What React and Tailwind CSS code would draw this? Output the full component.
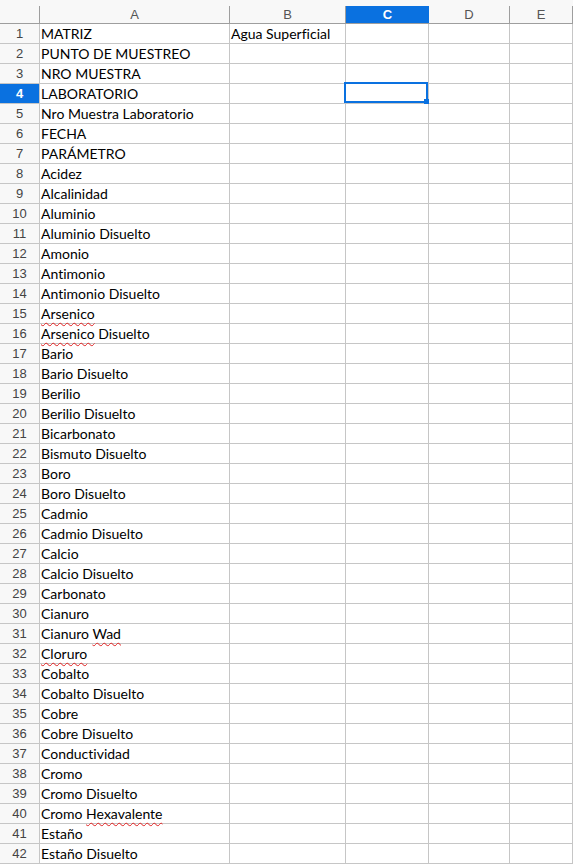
import React from "react";

const rows = [
  ["MATRIZ", "Agua Superficial"],
  ["PUNTO DE MUESTREO"],
  ["NRO MUESTRA"],
  ["LABORATORIO"],
  ["Nro Muestra Laboratorio"],
  ["FECHA"],
  ["PARÁMETRO"],
  ["Acidez"],
  ["Alcalinidad"],
  ["Aluminio"],
  ["Aluminio Disuelto"],
  ["Amonio"],
  ["Antimonio"],
  ["Antimonio Disuelto"],
  [[{ t: "Arsenico", bad: true }]],
  [[{ t: "Arsenico", bad: true }, { t: " Disuelto" }]],
  ["Bario"],
  ["Bario Disuelto"],
  ["Berilio"],
  ["Berilio Disuelto"],
  ["Bicarbonato"],
  ["Bismuto Disuelto"],
  ["Boro"],
  ["Boro Disuelto"],
  ["Cadmio"],
  ["Cadmio Disuelto"],
  ["Calcio"],
  ["Calcio Disuelto"],
  ["Carbonato"],
  ["Cianuro"],
  [[{ t: "Cianuro " }, { t: "Wad", bad: true }]],
  [[{ t: "Cloruro", bad: true }]],
  ["Cobalto"],
  ["Cobalto Disuelto"],
  ["Cobre"],
  ["Cobre Disuelto"],
  ["Conductividad"],
  ["Cromo"],
  ["Cromo Disuelto"],
  [[{ t: "Cromo " }, { t: "Hexavalente", bad: true }]],
  ["Estaño"],
  ["Estaño Disuelto"],
];

const cols = [
  { key: "A", w: "w-[190px]" },
  { key: "B", w: "w-[116px]" },
  { key: "C", w: "w-[83px]", active: true },
  { key: "D", w: "w-[81px]" },
  { key: "E", w: "flex-1" },
];

const CellText = ({ value }) => {
  if (!value) return null;
  if (typeof value === "string") return value;
  return value.map((p, i) =>
    p.bad ? (
      <span
        key={i}
        className="underline decoration-wavy decoration-[#e02020] decoration-1 underline-offset-[3px]"
      >
        {p.t}
      </span>
    ) : (
      <span key={i} className="whitespace-pre">
        {p.t}
      </span>
    )
  );
};

export default function App() {
  return (
    <div className="w-[573px] h-[864px] overflow-hidden bg-white select-none">
      {/* column headers */}
      <div className="flex h-[24px] bg-[#f8f8f8] border-b border-[#9e9e9e] font-['Liberation_Sans',sans-serif] text-[13px] text-[#555]">
        <div className="w-[40px] h-full flex items-end shrink-0">
          <div className="w-full h-[17px] border-r border-[#9e9e9e]" />
        </div>
        {cols.map((c) =>
          c.active ? (
            <div key={c.key} className={`${c.w} shrink-0 h-full flex items-end`}>
              <div className="w-full h-[17px] bg-[#0a71e0] text-white font-bold flex items-center justify-center">
                {c.key}
              </div>
            </div>
          ) : (
            <div key={c.key} className={`${c.w} shrink-0 h-full flex items-end`}>
              <div className="w-full h-[17px] border-r border-[#9e9e9e] flex items-center justify-center">
                {c.key}
              </div>
            </div>
          )
        )}
      </div>

      {/* rows */}
      {rows.map((r, i) => {
        const n = i + 1;
        const activeRow = n === 4;
        return (
          <div key={n} className="flex h-[20px]">
            <div
              className={`w-[40px] shrink-0 border-r border-b border-[#c6c6c6] flex items-center justify-center font-['Liberation_Sans',sans-serif] text-[13px] ${
                activeRow
                  ? "bg-[#0a71e0] text-white font-bold"
                  : "bg-[#f8f8f8] text-[#444]"
              }`}
            >
              {n}
            </div>
            {cols.map((c, j) => (
              <div
                key={c.key}
                className={`${c.w} shrink-0 relative border-r border-b border-[#c6c6c6] pl-[1px] flex items-center whitespace-nowrap font-['Lato',sans-serif] text-[14px] text-black leading-none [font-variant-ligatures:none]`}
              >
                <span className="z-10">
                  <CellText value={r[j]} />
                </span>
                {c.active && activeRow && (
                  <div className="absolute -left-[2px] -top-[2px] w-[84px] h-[21px] border-2 border-[#0a71e0] z-20">
                    <div className="absolute -right-[3px] -bottom-[3px] w-[5px] h-[5px] bg-[#0a71e0]" />
                  </div>
                )}
              </div>
            ))}
          </div>
        );
      })}
    </div>
  );
}
